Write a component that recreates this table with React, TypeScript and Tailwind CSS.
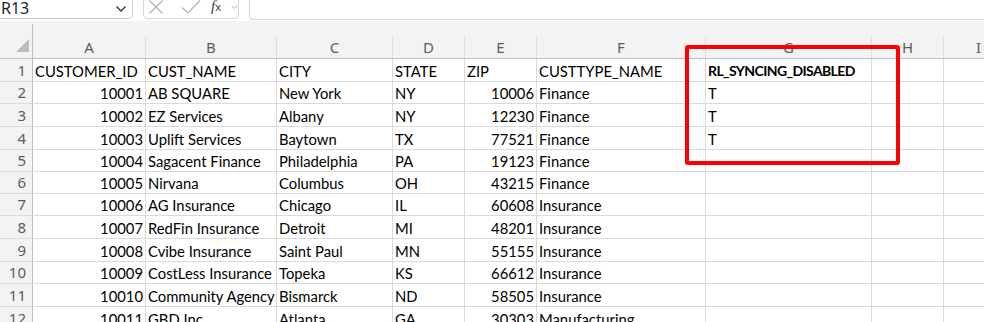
import React from "react";

const cellFont = { fontFamily: "Lato, 'Liberation Sans', sans-serif" };
const uiFont = { fontFamily: "'Noto Sans', 'Liberation Sans', sans-serif" };

type Col = { letter: string; w: string; right?: boolean };

const cols: Col[] = [
  { letter: "A", w: "w-[113px]", right: true },
  { letter: "B", w: "w-[131px]" },
  { letter: "C", w: "w-[116px]" },
  { letter: "D", w: "w-[72px]" },
  { letter: "E", w: "w-[72px]", right: true },
  { letter: "F", w: "w-[169px]" },
  { letter: "G", w: "w-[166px]" },
  { letter: "H", w: "w-[72px]" },
];

const rowHeights = [
  "h-[23px]",
  "h-[22px]",
  "h-[23px]",
  "h-[23px]",
  "h-[22px]",
  "h-[22px]",
  "h-[22px]",
  "h-[23px]",
  "h-[23px]",
  "h-[22px]",
  "h-[23px]",
  "h-[23px]",
];

const data: string[][] = [
  ["CUSTOMER_ID", "CUST_NAME", "CITY", "STATE", "ZIP", "CUSTTYPE_NAME", "RL_SYNCING_DISABLED", ""],
  ["10001", "AB SQUARE", "New York", "NY", "10006", "Finance", "T", ""],
  ["10002", "EZ Services", "Albany", "NY", "12230", "Finance", "T", ""],
  ["10003", "Uplift Services", "Baytown", "TX", "77521", "Finance", "T", ""],
  ["10004", "Sagacent Finance", "Philadelphia", "PA", "19123", "Finance", "", ""],
  ["10005", "Nirvana", "Columbus", "OH", "43215", "Finance", "", ""],
  ["10006", "AG Insurance", "Chicago", "IL", "60608", "Insurance", "", ""],
  ["10007", "RedFin Insurance", "Detroit", "MI", "48201", "Insurance", "", ""],
  ["10008", "Cvibe Insurance", "Saint Paul", "MN", "55155", "Insurance", "", ""],
  ["10009", "CostLess Insurance", "Topeka", "KS", "66612", "Insurance", "", ""],
  ["10010", "Community Agency", "Bismarck", "ND", "58505", "Insurance", "", ""],
  ["10011", "GBD Inc", "Atlanta", "GA", "30303", "Manufacturing", "", ""],
];

function TopBar() {
  return (
    <div className="h-[21px] bg-white flex items-end overflow-hidden" style={uiFont}>
      <div className="ml-[-6px] w-[139px] h-[26px] mb-[2px] border border-[#cfcfcf] rounded-[4px] flex items-center justify-between pl-[6px] pr-[5px] pt-[4px] shrink-0">
        <span className="text-[16px] text-[#1f1f1f] leading-none">R13</span>
        <svg width="12" height="8" viewBox="0 0 12 8" className="mt-[2px]">
          <path d="M1.5 1.5 L6 6 L10.5 1.5" stroke="#333" strokeWidth="1.3" fill="none" />
        </svg>
      </div>
      <div className="ml-[10px] w-[96px] h-[26px] mb-[2px] border border-[#d6d6d6] rounded-[4px] flex items-center pt-[3px] shrink-0 relative">
        <svg width="16" height="14" viewBox="0 0 16 14" className="absolute left-[4px] top-[6px]">
          <path d="M1.5 0.5 L14.5 13.5 M14.5 0.5 L1.5 13.5" stroke="#b3b3b3" strokeWidth="1.2" fill="none" />
        </svg>
        <svg width="20" height="14" viewBox="0 0 20 14" className="absolute left-[37px] top-[6px]">
          <path d="M1 7.5 L7 13 L19 0.5" stroke="#b3b3b3" strokeWidth="1.2" fill="none" />
        </svg>
        <span
          className="absolute left-[67px] top-[5px] text-[15px] italic text-[#3a3a3a] leading-none"
          style={{ fontFamily: "'Liberation Serif', serif" }}
        >
          f<span className="text-[11px] not-italic" style={uiFont}>x</span>
        </span>
        <svg width="7" height="5" viewBox="0 0 7 5" className="absolute left-[87px] top-[11px]">
          <path d="M0.8 0.8 L3.5 3.6 L6.2 0.8" stroke="#b0b0b0" strokeWidth="1" fill="none" />
        </svg>
      </div>
      <div className="ml-[10px] flex-1 h-[26px] mb-[1px] mr-[-10px] border border-[#d6d6d6] rounded-[4px]" />
    </div>
  );
}

function HeaderBand() {
  return (
    <div className="h-[38px] bg-[#f3f3f3] border-b border-[#c2c2c2] flex items-end" style={uiFont}>
      <div className="w-[33px] h-[34px] border-r border-[#bfbfbf] shrink-0 relative">
        <svg width="14" height="14" viewBox="0 0 14 14" className="absolute left-[16px] top-[15px]">
          <path d="M13 0 L13 13 L0 13 Z" fill="#bdbdbd" />
        </svg>
      </div>
      {cols.map((c) => (
        <div
          key={c.letter}
          className={`${c.w} h-[21px] border-r border-[#dcdcdc] shrink-0 flex items-center justify-center text-[15px] text-[#5c5c5c] leading-none`}
        >
          {c.letter}
        </div>
      ))}
      <div className="flex-1 h-[21px] flex items-center pl-[32px] text-[15px] text-[#5c5c5c] leading-none">I</div>
    </div>
  );
}

function Grid() {
  return (
    <div>
      {data.map((row, ri) => (
        <div key={ri} className={`${rowHeights[ri]} flex`}>
          <div
            className="w-[33px] shrink-0 bg-[#f3f3f3] border-r border-r-[#bfbfbf] border-b border-b-[#dcdcdc] flex items-center justify-end pr-[6px] text-[15px] text-[#5c5c5c] leading-none"
            style={uiFont}
          >
            {ri + 1}
          </div>
          {cols.map((c, ci) => {
            const v = row[ci];
            const right = c.right && ri > 0;
            const bold = ri === 0 && ci === 6;
            return (
              <div
                key={ci}
                className={`${c.w} shrink-0 border-r border-b border-[#dadada] flex items-center overflow-hidden whitespace-nowrap text-black leading-none pt-[2px] ${
                  right ? "justify-end pr-[2px]" : "pl-[2px]"
                } ${bold ? "font-bold text-[14px] tracking-[-0.6px]" : "text-[14.8px]"}`}
                style={cellFont}
              >
                {v}
              </div>
            );
          })}
          <div className="flex-1 border-b border-[#dadada]" />
        </div>
      ))}
    </div>
  );
}

export default function App() {
  return (
    <div className="w-[984px] h-[322px] overflow-hidden bg-white relative">
      <TopBar />
      <HeaderBand />
      <Grid />
      <div className="absolute left-[685px] top-[45px] w-[215px] h-[120px] border-[4px] border-[#ff0000] rounded-[3px] pointer-events-none" />
    </div>
  );
}
